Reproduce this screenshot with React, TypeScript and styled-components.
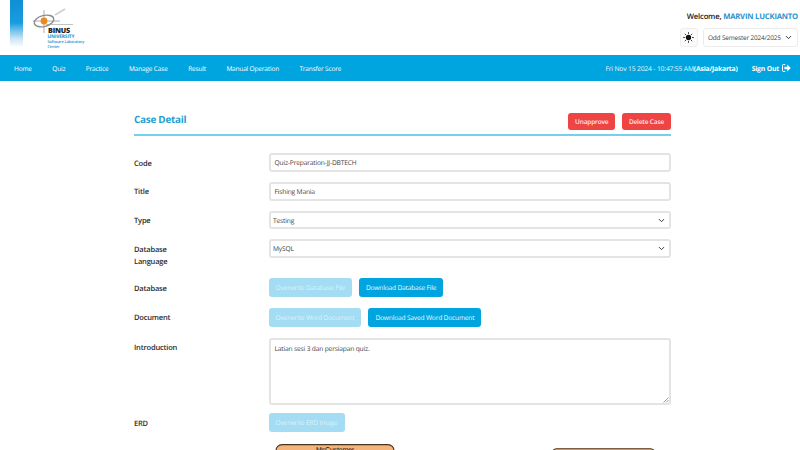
import { createGlobalStyle, styled } from 'styled-components';
import { ChevronDown } from 'lucide-react';

const GlobalStyle = createGlobalStyle`
  html, body {
    height: 450px;
    margin: 0;
    overflow: hidden;
    background: #fff;
  }

  body, input, select, textarea, button {
    font-family: "Open Sans", "Noto Sans", sans-serif;
    text-rendering: geometricPrecision;
  }

  * {
    box-sizing: border-box;
    letter-spacing: -0.025em;
  }
`;

const navItems = ['Home', 'Quiz', 'Practice', 'Manage Case', 'Result', 'Manual Operation', 'Transfer Score'];

const fields = [
  { label: 'Code', value: 'Quiz-Preparation-JJ-DBTECH' },
  { label: 'Title', value: 'Fishing Mania' },
];

const selects = [
  { label: 'Type', value: 'Testing' },
  { label: 'Database Language', value: 'MySQL' },
];

const Logo = () => (
  <LogoArea>
    <Ribbon />
    <Mark width="60" height="46" viewBox="0 0 60 46">
      <path d="M1 15 H28 M12 4 V27" stroke="#8a8a8a" strokeWidth="0.7" fill="none" />
      <ellipse cx="12" cy="15" rx="10" ry="5.5" fill="none" stroke="#8d8d8d" strokeWidth="1.4" transform="rotate(-14 12 15)" />
      <circle cx="12" cy="15" r="3.4" fill="#ee8a1d" />
      <path d="M23 9 L33 3" stroke="#d0d0d0" strokeWidth="2" />
      <path d="M14 18.5 H41" stroke="#9a9a9a" strokeWidth="0.6" />
      <text x="16" y="27" fontFamily="Open Sans, sans-serif" fontSize="7.2" fontWeight="800" fill="#222">BINUS</text>
      <text x="15.5" y="32" fontFamily="Open Sans, sans-serif" fontSize="4.8" fontWeight="700" fill="#1a93d0">UNIVERSITY</text>
      <text x="15.5" y="37" fontFamily="Open Sans, sans-serif" fontSize="3.9" fontWeight="600" fill="#1a93d0">Software Laboratory</text>
      <text x="15.5" y="42" fontFamily="Open Sans, sans-serif" fontSize="3.9" fontWeight="600" fill="#1a93d0">Center</text>
    </Mark>
  </LogoArea>
);

const SunIcon = () => (
  <svg width="11" height="11" viewBox="0 0 12 12">
    <circle cx="6" cy="6" r="2.9" fill="#111" />
    <path
      d="M6 0.3V2M6 10V11.7M0.3 6H2M10 6H11.7M2 2L3.1 3.1M8.9 8.9L10 10M2 10L3.1 8.9M8.9 3.1L10 2"
      stroke="#111"
      strokeWidth="1"
    />
  </svg>
);

const SignOutIcon = () => (
  <svg width="9" height="8" viewBox="0 0 9 8">
    <path d="M3.3 0.6H1.2Q0.5 0.6 0.5 1.3V6.7Q0.5 7.4 1.2 7.4H3.3" fill="none" stroke="#fff" strokeWidth="1" />
    <path d="M5.3 0.6L8.8 4L5.3 7.4V5.3H2.4V2.7H5.3Z" fill="#fff" />
  </svg>
);

const ErdDiagram = () => (
  <ErdImage width="537" height="6" viewBox="0 0 537 6">
    <rect x="142" y="0.6" width="118" height="20" rx="6" fill="#f4b47a" stroke="#4a3520" strokeWidth="1.1" />
    <text x="201" y="8" textAnchor="middle" fontFamily="Liberation Sans, sans-serif" fontSize="7" fill="#111">
      MsCustomer
    </text>
    <rect x="417.5" y="4.8" width="104" height="20" rx="5" fill="#f4b47a" stroke="#4a3520" strokeWidth="1.1" />
  </ErdImage>
);

const App = () => (
  <>
    <GlobalStyle />
    <Header>
      <Logo />
      <HeaderRight>
        <Welcome>
          Welcome, <UserName>MARVIN LUCKIANTO</UserName>
        </Welcome>
        <HeaderControls>
          <ThemeButton>
            <SunIcon />
          </ThemeButton>
          <SemesterSelect>
            <span>Odd Semester 2024/2025</span>
            <ChevronDown size={9} strokeWidth={2.6} color="#333" />
          </SemesterSelect>
        </HeaderControls>
      </HeaderRight>
    </Header>

    <NavBar>
      <NavLinks>
        {navItems.map((item) => (
          <NavLink key={item}>{item}</NavLink>
        ))}
      </NavLinks>
      <NavRight>
        <DateText>
          Fri Nov 15 2024 - 10:47:55 AM<strong>(Asia/Jakarta)</strong>
        </DateText>
        <SignOut>
          Sign Out <SignOutIcon />
        </SignOut>
      </NavRight>
    </NavBar>

    <Main>
      <TitleRow>
        <Title>Case Detail</Title>
        <TitleActions>
          <DangerButton>Unapprove</DangerButton>
          <DangerButton>Delete Case</DangerButton>
        </TitleActions>
      </TitleRow>

      <Form>
        {fields.map((field) => (
          <Row key={field.label}>
            <Label>{field.label}</Label>
            <TextField>{field.value}</TextField>
          </Row>
        ))}
        {selects.map((field) => (
          <Row key={field.label}>
            <Label>{field.label}</Label>
            <SelectField>
              <span>{field.value}</span>
              <ChevronDown size={9} strokeWidth={2.6} color="#333" />
            </SelectField>
          </Row>
        ))}
        <Row>
          <Label $top={5}>Database</Label>
          <ButtonGroup>
            <PrimaryButton $disabled>Overwrite Database File</PrimaryButton>
            <PrimaryButton>Download Database File</PrimaryButton>
          </ButtonGroup>
        </Row>
        <Row>
          <Label>Document</Label>
          <ButtonGroup>
            <PrimaryButton $disabled>Overwrite Word Document</PrimaryButton>
            <PrimaryButton>Download Saved Word Document</PrimaryButton>
          </ButtonGroup>
        </Row>
        <IntroRow>
          <Label $top={3.4}>Introduction</Label>
          <TextArea>
            Latian sesi 3 dan persiapan quiz.
            <ResizeGrip width="6" height="6" viewBox="0 0 6 6">
              <path d="M0.5 5.5L5.5 0.5M3 5.5L5.5 3" stroke="#8a8a8a" strokeWidth="0.8" />
            </ResizeGrip>
          </TextArea>
        </IntroRow>
        <Row>
          <Label>ERD</Label>
          <ButtonGroup>
            <PrimaryButton $disabled>Overwrite ERD Image</PrimaryButton>
          </ButtonGroup>
        </Row>
      </Form>
      <ErdDiagram />
    </Main>
  </>
);

export default App;

const Header = styled.header`
  display: flex;
  justify-content: space-between;
  height: 55px;
  background: #fff;
`;

const LogoArea = styled.div`
  display: flex;
  padding-left: 10px;
`;

const Ribbon = styled.div`
  width: 13px;
  height: 46px;
  background: linear-gradient(180deg, #0f8fd6 0%, #1a9ce0 50%, #5bb8e8 62%, #cfe6f4 85%, #f4fafd 100%);
`;

const Mark = styled.svg`
  margin: 6px 0 0 9px;
`;

const HeaderRight = styled.div`
  display: flex;
  flex-direction: column;
  align-items: flex-end;
  padding: 10.5px 2px 0 0;
`;

const Welcome = styled.div`
  font-size: 7.66px;
  font-weight: 600;
  line-height: 12px;
  color: #222;
`;

const UserName = styled.span`
  font-weight: 700;
  color: #2a93cf;
`;

const HeaderControls = styled.div`
  display: flex;
  gap: 5px;
  margin-top: 5px;
`;

const ThemeButton = styled.div`
  display: flex;
  align-items: center;
  justify-content: center;
  width: 18.5px;
  height: 19px;
  background: #fafafa;
  border: 1px solid #eeeeee;
  border-radius: 3px;
`;

const SemesterSelect = styled.div`
  display: flex;
  align-items: center;
  justify-content: space-between;
  width: 95px;
  height: 19px;
  padding: 0 4px 0 4px;
  font-size: 6.45px;
  color: #444;
  white-space: nowrap;
  background: #fff;
  border: 1px solid #ececec;
  border-radius: 3px;
`;

const NavBar = styled.nav`
  display: flex;
  align-items: center;
  justify-content: space-between;
  height: 26px;
  padding: 0 9px 0 14px;
  background: #00a5e0;
`;

const NavLinks = styled.div`
  display: flex;
  gap: 20.5px;
`;

const NavLink = styled.a`
  font-size: 6.5px;
  color: #fff;
  white-space: nowrap;
`;

const NavRight = styled.div`
  display: flex;
  align-items: center;
  gap: 14px;
`;

const DateText = styled.span`
  font-size: 6.75px;
  color: #e4f5fc;

  strong {
    font-weight: 700;
    color: #fff;
  }
`;

const SignOut = styled.span`
  display: inline-flex;
  align-items: center;
  gap: 3px;
  font-size: 6.8px;
  font-weight: 700;
  color: #fff;
`;

const Main = styled.main`
  width: 537px;
  margin: 0 0 0 134px;
  padding-top: 32px;
`;

const TitleRow = styled.div`
  display: flex;
  align-items: flex-start;
  justify-content: space-between;
  height: 23px;
  border-bottom: 2px solid #74d0ec;
`;

const Title = styled.h1`
  margin: 0;
  font-size: 9.9px;
  font-weight: 700;
  line-height: 13px;
  color: #1f9fd4;
`;

const TitleActions = styled.div`
  display: flex;
  gap: 6.5px;
`;

const DangerButton = styled.button`
  height: 17px;
  padding: 0 7px;
  font-size: 6.5px;
  font-weight: 600;
  color: #fdeaea;
  background: #ef4444;
  border: 0;
  border-radius: 3px;
`;

const Form = styled.div`
  display: flex;
  flex-direction: column;
  gap: 10px;
  margin-top: 17.3px;
`;

const Row = styled.div`
  display: grid;
  grid-template-columns: 134.5px 1fr;
  align-items: start;
`;

const IntroRow = styled(Row)`
  margin-bottom: -1.5px;
`;

const Label = styled.div<{ $top?: number }>`
  width: 50px;
  padding-top: ${({ $top }) => $top ?? 4.4}px;
  font-size: 7.5px;
  font-weight: 600;
  line-height: 12px;
  color: #2b2b2b;
`;

const TextField = styled.div`
  display: flex;
  align-items: center;
  height: 18.7px;
  padding: 0 4px;
  font-size: 6.65px;
  color: #444;
  background: #fff;
  border: 2px solid #e4e4e4;
  border-radius: 3px;
`;

const SelectField = styled(TextField)`
  justify-content: space-between;
  padding: 0 3px 0 2.5px;
`;

const ButtonGroup = styled.div`
  display: flex;
  gap: 7px;
  padding-bottom: 1.3px;
`;

const PrimaryButton = styled.button<{ $disabled?: boolean }>`
  height: 19px;
  padding: 0 7px;
  font-size: 6.6px;
  font-weight: 400;
  color: ${({ $disabled }) => ($disabled ? '#dbf2fb' : '#eef9fd')};
  background: ${({ $disabled }) => ($disabled ? '#a3dcf3' : '#00a5e0')};
  border: 0;
  border-radius: 3px;
`;

const TextArea = styled.div`
  position: relative;
  height: 66.3px;
  padding: 2.5px 4px;
  font-size: 6.65px;
  line-height: 11px;
  color: #444;
  background: #fff;
  border: 2px solid #e4e4e4;
  border-radius: 3px;
`;

const ResizeGrip = styled.svg`
  position: absolute;
  right: 0;
  bottom: 0;
`;

const ErdImage = styled.svg`
  display: block;
  margin-top: 10.5px;
  overflow: hidden;
`;
